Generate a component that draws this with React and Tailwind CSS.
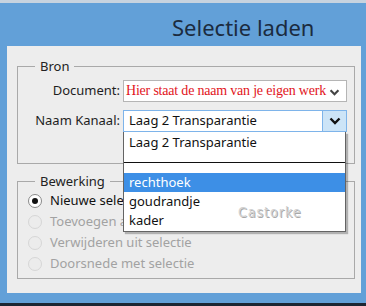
import { useState } from "react";

const ui = { fontFamily: '"Noto Sans", "DejaVu Sans", sans-serif' };
const serif = { fontFamily: '"Liberation Serif", "Times New Roman", serif' };

const options = [
  { name: "rechthoek", active: true },
  { name: "goudrandje" },
  { name: "kader" },
];

const modes = [
  { label: "Nieuwe selectie", checked: true },
  { label: "Toevoegen aan selectie", disabled: true },
  { label: "Verwijderen uit selectie", disabled: true },
  { label: "Doorsnede met selectie", disabled: true },
];

function Chevron({ className }) {
  return (
    <svg viewBox="0 0 12 8" className={className}>
      <path d="M1.5 1.5 L6 6 L10.5 1.5" fill="none" stroke="currentColor" strokeWidth="2.4" />
    </svg>
  );
}

function Radio({ checked, disabled }) {
  return (
    <span
      className={`flex h-[14px] w-[14px] items-center justify-center rounded-full border ${
        disabled ? "border-[#d6d6d6] bg-[#ececec]" : "border-[#8a8a8a] bg-white"
      }`}
    >
      {checked && <span className="h-[6px] w-[6px] rounded-full bg-[#111]" />}
    </span>
  );
}

export default function App() {
  const [mode] = useState(0);

  return (
    <div className="flex h-[306px] w-[366px] flex-col overflow-hidden bg-[#62a0d8]" style={ui}>
      <div className="h-[3px] bg-[#c7d3df]" />
      <div className="flex h-[43px] items-center pl-[172px] pt-[5px]">
        <h1 className="text-[22px] leading-none text-[#1b2b3f]">Selectie laden</h1>
      </div>

      <div className="ml-[7px] mr-[5px] h-[247px] bg-[#ededed] pl-[10px] pr-[6px] pt-[11px]">
        <fieldset className="h-[107px] border border-[#a9a9a9] px-0">
          <legend className="ml-[17px] px-[5px] text-[13px] leading-[18px] text-[#222]">Bron</legend>

          <div className="mt-[5px] flex items-center">
            <span className="w-[102px] text-right text-[13px] text-[#1e1e1e]">Document:</span>
            <div className="relative ml-[3px] flex h-[22px] w-[224px] items-center overflow-hidden border border-[#b5b5b5] bg-white pl-[2px]">
              <span
                className="whitespace-nowrap text-[14px] leading-none tracking-[-0.2px] text-[#e2141c]"
                style={serif}
              >
                Hier staat de naam van je eigen werk
              </span>
              <Chevron className="absolute right-[6px] top-[8px] h-[7px] w-[11px] text-[#444]" />
            </div>
          </div>

          <div className="mt-[8px] flex items-center">
            <span className="w-[102px] text-right text-[13px] text-[#1e1e1e]">Naam Kanaal:</span>
            <div className="relative ml-[3px] w-[224px]">
              <div className="flex h-[22px] items-center border border-[#7eb4ea] bg-white">
                <span className="flex-1 pl-[5px] text-[13px] text-[#111]">Laag 2 Transparantie</span>
                <span className="flex h-full w-[24px] items-center justify-center border-l border-[#7eb4ea] bg-[#cce4f7]">
                  <Chevron className="h-[8px] w-[12px] text-[#111]" />
                </span>
              </div>

              <div className="absolute left-0 top-[22px] z-10 w-[223px] border border-t-0 border-[#646464] bg-white shadow-[2px_2px_1px_rgba(0,0,0,0.25)]">
                <div className="flex h-[21px] items-center pl-[5px] text-[13px] text-[#111]">Laag 2 Transparantie</div>
                <div className="h-[9px]" />
                <div className="h-px bg-[#111]" />
                <div className="h-[10px]" />
                {options.map((o) => (
                  <div
                    key={o.name}
                    className={`flex h-[19px] items-center pl-[5px] text-[13px] ${
                      o.active ? "bg-[#3d8fe6] text-white" : "text-[#111]"
                    } ${o.name === "kader" ? "mb-[1px]" : ""}`}
                  >
                    {o.name}
                  </div>
                ))}
                <span
                  className="absolute left-[114px] top-[70px] text-[14px] tracking-[1px] text-[#d2d2d2]"
                  style={{ fontFamily: '"DejaVu Sans Condensed", "DejaVu Sans", sans-serif', textShadow: "1px 1px 0 #a8a8a8" }}
                >
                  Castorke
                </span>
              </div>
            </div>
          </div>
        </fieldset>

        <fieldset className="mt-[8px] h-[107px] border border-[#a9a9a9] px-0">
          <legend className="ml-[17px] px-[5px] text-[13px] leading-[18px] text-[#222]">Bewerking</legend>
          <div className="flex flex-col gap-[7px] pl-[10px] pt-[4px]">
            {modes.map((m, i) => (
              <label key={m.label} className="flex h-[14px] items-center gap-[8px]">
                <Radio checked={i === mode} disabled={m.disabled} />
                <span className={`text-[13px] ${m.disabled ? "text-[#a2a2a2]" : "text-[#111]"}`}>{m.label}</span>
              </label>
            ))}
          </div>
        </fieldset>
      </div>

      <div className="h-[10px]" />
      <div className="flex-1 bg-[#1c2633]" />
    </div>
  );
}
